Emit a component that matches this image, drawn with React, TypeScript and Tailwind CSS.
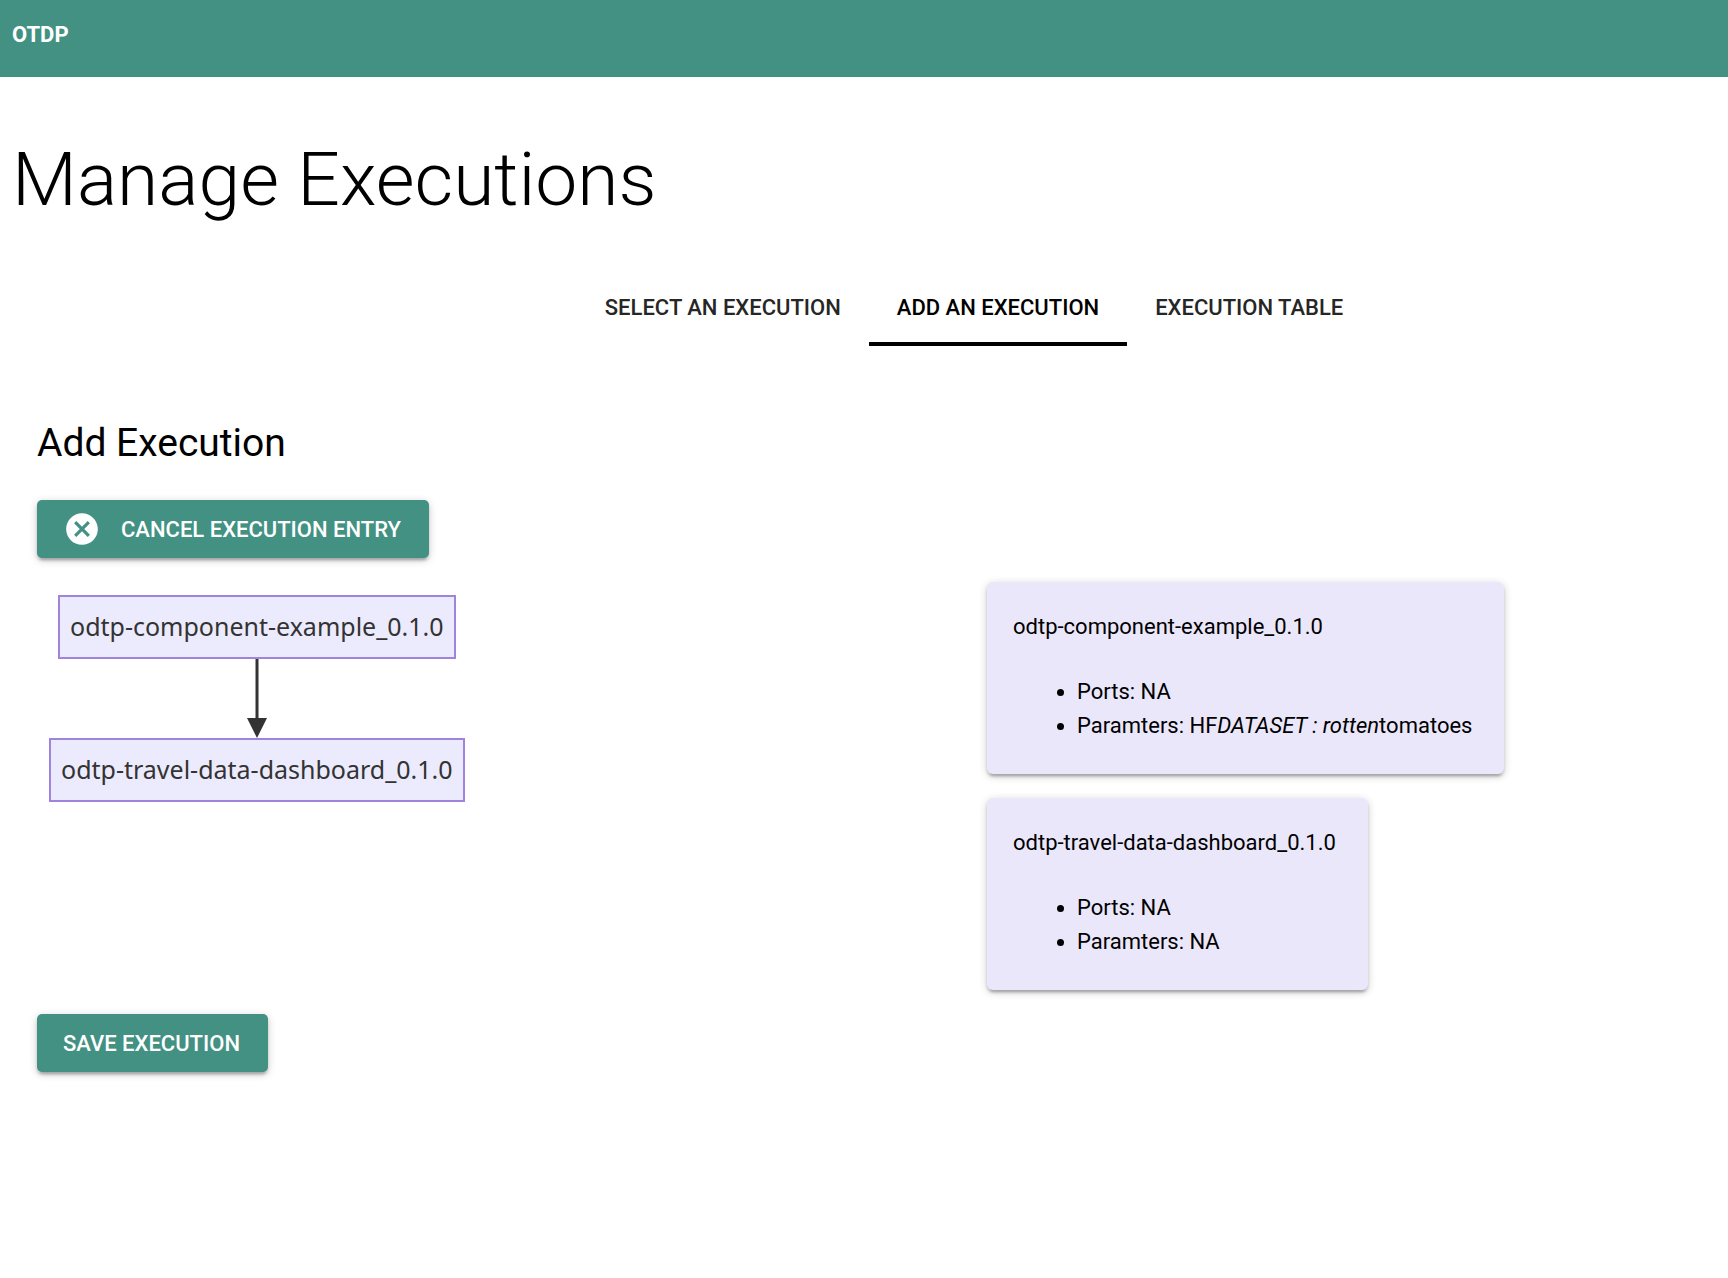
import React from "react";
import { MdCancel } from "react-icons/md";

const TABS = ["Select an execution", "Add an execution", "Execution table"];

const RAISED =
  "shadow-[0_2px_8px_rgba(0,0,0,0.2),0_3px_3px_rgba(0,0,0,0.14),0_5px_2px_-3px_rgba(0,0,0,0.12)]";

function ActionButton({ children }: { children: React.ReactNode }) {
  return (
    <button
      type="button"
      className={`flex h-[58px] items-center gap-5 rounded-[5px] bg-[#429183] pr-7 pl-[26px] text-[22px] font-medium uppercase text-white ${RAISED}`}
    >
      {children}
    </button>
  );
}

function Node({ children }: { children: React.ReactNode }) {
  return (
    <div className="flex h-16 items-center whitespace-nowrap border-2 border-[#9f83dd] bg-[#ecebfd] px-[10px] font-['Noto_Sans',sans-serif] text-[25px] text-[#333333]">
      {children}
    </div>
  );
}

function ComponentCard({ name, children }: { name: string; children: React.ReactNode }) {
  return (
    <article
      className={`flex flex-col gap-8 rounded-md bg-[#ebe7fb] pt-7 pr-8 pb-8 pl-[26px] text-[22px] leading-[33px] ${RAISED}`}
    >
      <p>{name}</p>
      <ul className="list-disc pl-16">{children}</ul>
    </article>
  );
}

export default function App() {
  return (
    <div className="min-h-screen bg-white font-[Roboto,sans-serif] text-black">
      <header className="h-[77px] bg-[#429183] px-3 pt-[19px]">
        <a href="#" className="text-[22px] leading-8 font-bold text-white">
          OTDP
        </a>
      </header>

      <main>
        <h1 className="px-3 pt-16 text-[75px] leading-[77px] font-light">Manage Executions</h1>

        <nav role="tablist" className="mt-[51px] flex justify-center pl-[220px]">
          {TABS.map((tab, i) => (
            <button
              key={tab}
              type="button"
              role="tab"
              aria-selected={i === 1}
              className={`h-[77px] border-b-4 px-7 pt-1 text-[22px] font-medium whitespace-nowrap uppercase ${
                i === 1 ? "border-black text-black" : "border-transparent text-[#262626]"
              }`}
            >
              {tab}
            </button>
          ))}
        </nav>

        <section className="px-[37px] pt-[71px]">
          <h2 className="text-[39px] leading-[52px]">Add Execution</h2>
          <div className="mt-[31px] flex">
            <ActionButton>
              <MdCancel className="size-[38px]" />
              Cancel execution entry
            </ActionButton>
          </div>

          <div className="mt-6 grid grid-cols-[950px_1fr]">
            <div className="flex items-start pt-[13px] pl-3">
              <div className="flex flex-col items-center">
                <Node>odtp-component-example_0.1.0</Node>
                <svg width="20" height="79" viewBox="0 0 20 79" aria-hidden="true">
                  <path d="M10 0V62" stroke="#333333" strokeWidth="3" />
                  <path d="M0 59H20L10 79Z" fill="#333333" />
                </svg>
                <Node>odtp-travel-data-dashboard_0.1.0</Node>
              </div>
            </div>
            <div className="flex flex-col items-start gap-6">
              <ComponentCard name="odtp-component-example_0.1.0">
                <li className="leading-[34px]">Ports: NA</li>
                <li>
                  Paramters: HF<em>DATASET : rotten</em>tomatoes
                </li>
              </ComponentCard>
              <ComponentCard name="odtp-travel-data-dashboard_0.1.0">
                <li className="leading-[34px]">Ports: NA</li>
                <li>Paramters: NA</li>
              </ComponentCard>
            </div>
          </div>

          <div className="mt-6 flex">
            <ActionButton>Save execution</ActionButton>
          </div>
        </section>
      </main>
    </div>
  );
}
